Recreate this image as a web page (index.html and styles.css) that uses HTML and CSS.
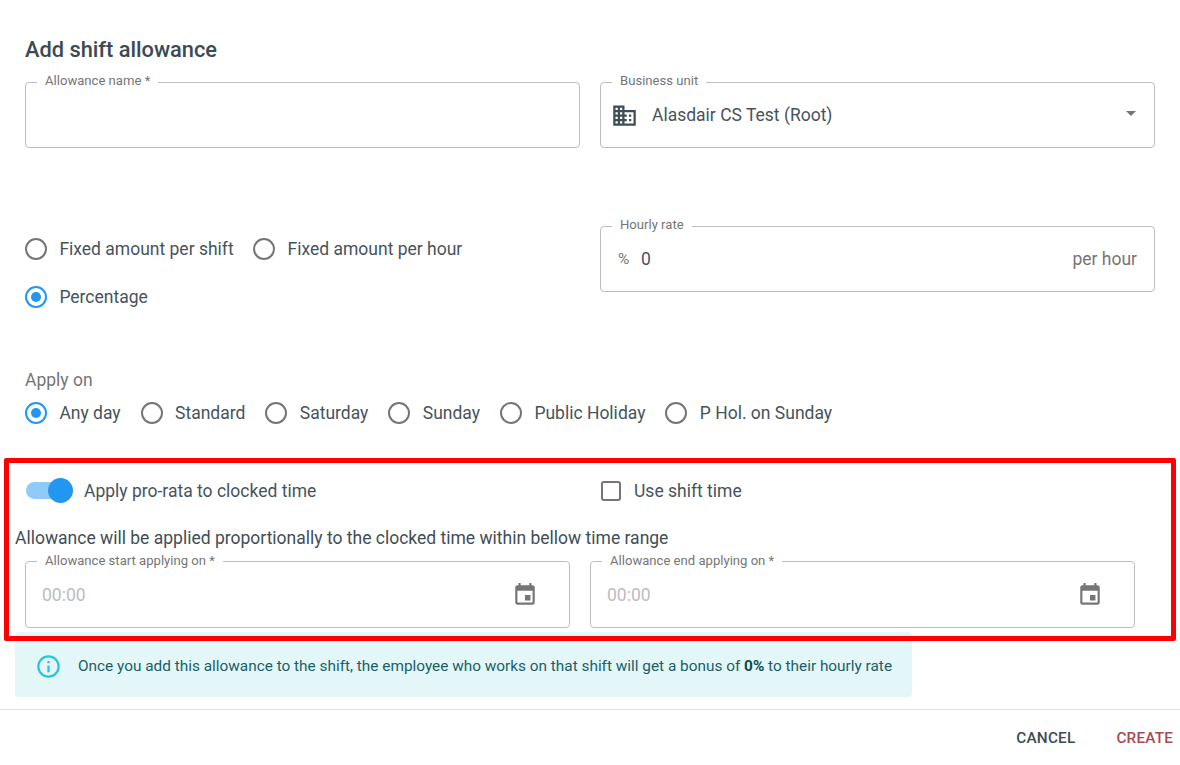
FILE: index.html
```html
<!DOCTYPE html>
<html lang="en">
<head>
<meta charset="utf-8">
<title>Add shift allowance</title>
<link rel="stylesheet" href="styles.css">
</head>
<body>
<main class="dialog">
  <h1 class="title">Add shift allowance</h1>

  <section class="two-col row-top">
    <fieldset class="field">
      <legend>Allowance name *</legend>
      <div class="field-body"></div>
    </fieldset>
    <fieldset class="field">
      <legend>Business unit</legend>
      <div class="field-body unit">
        <svg class="icon-domain" viewBox="0 0 24 24"><path d="M12 7V3H2v18h20V7H12zM6 19H4v-2h2v2zm0-4H4v-2h2v2zm0-4H4V9h2v2zm0-4H4V5h2v2zm4 12H8v-2h2v2zm0-4H8v-2h2v2zm0-4H8V9h2v2zm0-4H8V5h2v2zm10 12h-8v-2h2v-2h-2v-2h2v-2h-2V9h8v10zm-2-8h-2v2h2v-2zm0 4h-2v2h2v-2z"/></svg>
        <span class="value">Alasdair CS Test (Root)</span>
        <svg class="icon-caret" viewBox="0 0 24 24"><path d="M7 10l5 5 5-5z"/></svg>
      </div>
    </fieldset>
  </section>

  <section class="two-col row-rate">
    <div class="radio-wrap">
      <label class="radio"><span class="dot"></span>Fixed amount per shift</label>
      <label class="radio"><span class="dot"></span>Fixed amount per hour</label>
      <label class="radio"><span class="dot on"></span>Percentage</label>
    </div>
    <fieldset class="field">
      <legend>Hourly rate</legend>
      <div class="field-body rate">
        <span class="prefix">%</span>
        <span class="value">0</span>
        <span class="suffix">per hour</span>
      </div>
    </fieldset>
  </section>

  <p class="apply-title">Apply on</p>
  <div class="radio-line">
    <label class="radio"><span class="dot on"></span>Any day</label>
    <label class="radio"><span class="dot"></span>Standard</label>
    <label class="radio"><span class="dot"></span>Saturday</label>
    <label class="radio"><span class="dot"></span>Sunday</label>
    <label class="radio"><span class="dot"></span>Public Holiday</label>
    <label class="radio"><span class="dot"></span>P Hol. on Sunday</label>
  </div>

  <section class="two-col row-switch">
    <label class="toggle"><span class="track"><span class="thumb"></span></span>Apply pro-rata to clocked time</label>
    <label class="check"><span class="box"></span>Use shift time</label>
  </section>

  <p class="hint">Allowance will be applied proportionally to the clocked time within bellow time range</p>

  <section class="two-col row-times">
    <fieldset class="field">
      <legend>Allowance start applying on *</legend>
      <div class="field-body time">
        <span class="placeholder">00:00</span>
        <svg class="icon-event" viewBox="0 0 24 24"><path d="M17 12h-5v5h5v-5zM16 1v2H8V1H6v2H5c-1.11 0-1.99.9-1.99 2L3 19c0 1.1.89 2 2 2h14c1.1 0 2-.9 2-2V5c0-1.1-.9-2-2-2h-1V1h-2zm3 18H5V8h14v11z"/></svg>
      </div>
    </fieldset>
    <fieldset class="field">
      <legend>Allowance end applying on *</legend>
      <div class="field-body time">
        <span class="placeholder">00:00</span>
        <svg class="icon-event" viewBox="0 0 24 24"><path d="M17 12h-5v5h5v-5zM16 1v2H8V1H6v2H5c-1.11 0-1.99.9-1.99 2L3 19c0 1.1.89 2 2 2h14c1.1 0 2-.9 2-2V5c0-1.1-.9-2-2-2h-1V1h-2zm3 18H5V8h14v11z"/></svg>
      </div>
    </fieldset>
  </section>

  <div class="notice">
    <svg class="icon-info" viewBox="0 0 24 24"><path d="M11,9H13V7H11V9M12,20C7.59,20 4,16.41 4,12C4,7.59 7.59,4 12,4C16.41,4 20,7.59 20,12C20,16.41 16.41,20 12,20M12,2A10,10 0 0,0 2,12A10,10 0 0,0 12,22A10,10 0 0,0 22,12A10,10 0 0,0 12,2M11,17H13V11H11V17Z"/></svg>
    <span>Once you add this allowance to the shift, the employee who works on that shift will get a bonus of <b>0%</b> to their hourly rate</span>
  </div>

  <footer class="actions">
    <button class="btn cancel" type="button">Cancel</button>
    <button class="btn create" type="button">Create</button>
  </footer>
</main>
<div class="highlight"></div>
</body>
</html>
```

FILE: styles.css
```css
* { box-sizing: border-box; }
html, body { margin: 0; padding: 0; height: 765px; overflow: hidden; background: #fff; }
body { font-family: Roboto, "Liberation Sans", sans-serif; font-size: 17.5px; color: #47535c; position: relative; }

.dialog { display: flex; flex-direction: column; height: 765px; padding-top: 38px; }

.title { margin: 0 0 12px 25px; font-size: 21.8px; line-height: 24px; font-weight: 500; color: #3c4a54; }

.two-col { display: grid; grid-template-columns: 1fr 1fr; column-gap: 20px; padding: 0 25px; }

.field { margin: 0; padding: 0; min-width: 0; height: 74px; border: 1px solid #bdbdbd; border-radius: 4px; }
.field legend { margin-left: 11px; padding: 0 8px 2px; font-size: 13.1px; line-height: 14px; color: #757575; }
.field-body { display: flex; align-items: center; height: 66px; margin-top: -8px; }

.unit { padding: 0 11px 0 10px; }
.icon-domain { width: 27px; height: 27px; fill: #3f4d56; flex: none; }
.unit .value { margin-left: 14px; flex: 1; }
.icon-caret { width: 24px; height: 24px; fill: #757575; flex: none; margin-top: -4px; }

.row-rate { margin-top: 70px; }
.radio-wrap { display: flex; flex-wrap: wrap; column-gap: 19.5px; align-content: flex-start; padding-top: 7px; }
.radio-wrap .radio { height: 48px; }
.radio { display: flex; align-items: center; white-space: nowrap; }
.dot { width: 22px; height: 22px; margin-right: 12.4px; border: 2px solid #757575; border-radius: 50%; flex: none; display: flex; align-items: center; justify-content: center; }
.dot.on { border-color: #2196f3; }
.dot.on::after { content: ""; width: 10px; height: 10px; border-radius: 50%; background: #2196f3; }

.rate { padding: 0 17px; }
.prefix { color: #757575; font-size: 15.4px; width: 23px; }
.rate .value { flex: 1; }
.suffix { color: #757575; }

.apply-title { margin: 49px 0 0 25px; line-height: 20px; color: #757575; }
.radio-line { display: flex; gap: 20px; height: 32px; margin-top: 7px; padding-left: 25px; }

.row-switch { height: 32px; margin-top: 46px; align-items: center; }
.toggle { display: flex; align-items: center; padding-left: 1px; }
.track { display: flex; align-items: center; justify-content: flex-end; width: 34px; height: 17px; margin-right: 24px; border-radius: 9px; background: #90caf9; flex: none; }
.thumb { width: 25px; height: 25px; margin-right: -13px; border-radius: 50%; background: #2196f3; flex: none; }
.check { display: flex; align-items: center; }
.box { width: 20px; height: 20px; margin: 0 13px 0 1px; border: 2px solid #757575; border-radius: 3px; flex: none; }

.hint { margin: 21px 0 0 15px; line-height: 20px; color: #3f4d56; }

.row-times { margin-top: 6px; padding-right: 45px; }
.time { justify-content: space-between; padding: 0 31px 0 16px; }
.placeholder { color: #bdbdbd; }
.icon-event { width: 26px; height: 26px; fill: #757575; flex: none; }

.notice { display: flex; align-items: center; width: 897px; height: 66px; margin: 4px 0 0 15px; padding: 3px 0 0 20px; background: #e3f7f9; border-radius: 4px; font-size: 15.36px; color: #1b5e66; }
.notice b { font-weight: 700; color: #0d4a52; }
.icon-info { width: 27px; height: 27px; margin: 2px 16px 0 0; fill: #26c6da; flex: none; }

.actions { display: flex; justify-content: flex-end; align-items: center; gap: 41px; margin-top: 12px; height: 56px; padding-right: 7px; border-top: 1px solid #e0e0e0; }
.btn { padding: 0; border: 0; background: none; font: 500 15.3px Roboto, "Liberation Sans", sans-serif; letter-spacing: 0.2px; text-transform: uppercase; }
.cancel { color: #3c4a54; }
.create { color: #a94a4c; }

.highlight { position: absolute; left: 4px; top: 458px; width: 1172px; height: 183px; border: 5px solid #f00; border-radius: 2px; pointer-events: none; }
```
